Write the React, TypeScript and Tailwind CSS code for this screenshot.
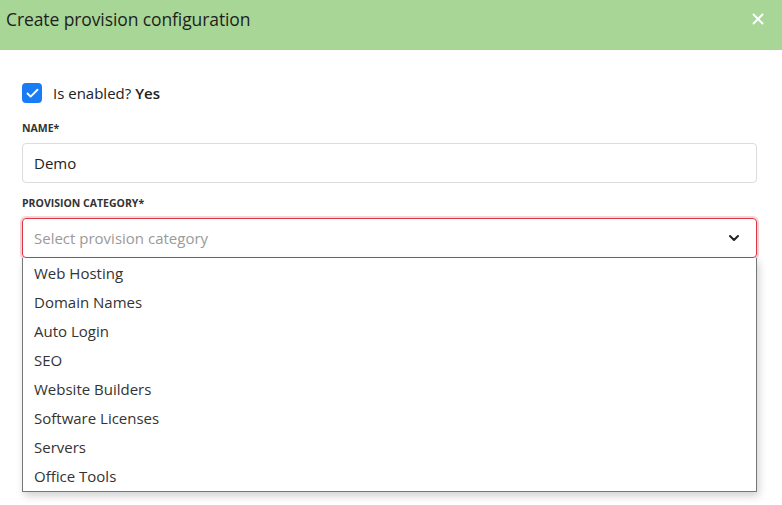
import React from 'react';
import { X, ChevronDown, Check } from 'lucide-react';

const categories = [
  'Web Hosting',
  'Domain Names',
  'Auto Login',
  'SEO',
  'Website Builders',
  'Software Licenses',
  'Servers',
  'Office Tools',
];

export default function App() {
  return (
    <div className="w-[782px] h-[505px] bg-white overflow-hidden text-[#212529]" style={{ fontFamily: '"Open Sans", "Noto Sans", sans-serif' }}>
      {/* Header */}
      <div className="h-[50px] bg-[#a8d696] flex items-start justify-between pl-[6px] pr-[15px] pt-[6px]">
        <h1 className="text-[17.5px] leading-[27px] text-[#1e1e1e] tracking-[-0.1px]">Create provision configuration</h1>
        <X className="w-[18px] h-[18px] text-white mt-[4px]" strokeWidth={2.5} />
      </div>

      {/* Body */}
      <div className="pl-[22px] pr-[25px] pt-[33px]">
        <label className="flex items-center gap-[11px] h-[20px]">
          <span className="w-[20px] h-[20px] rounded-[4px] bg-[#1a7cf5] flex items-center justify-center">
            <Check className="w-[15px] h-[15px] text-white" strokeWidth={3} />
          </span>
          <span className="text-[15px] text-[#222]">
            Is enabled? <b className="font-semibold">Yes</b>
          </span>
        </label>

        <div className="mt-[17px] text-[10.5px] font-bold text-[#333] leading-[16px]">NAME*</div>
        <div className="mt-[7px] h-[40px] border border-[#dcdcdc] rounded-[4px] flex items-center px-[11px] text-[15px] text-[#222]">
          Demo
        </div>

        <div className="mt-[12px] text-[10.5px] font-bold text-[#333] leading-[16px]">PROVISION CATEGORY*</div>
        <div className="relative mt-[7px]">
          <div className="h-[40px] border border-[#dc3545] rounded-[4px] shadow-[0_0_0_2px_rgba(220,53,69,0.2),0_3px_6px_rgba(0,0,0,0.08)] flex items-center justify-between pl-[11px] pr-[14px] text-[15px]">
            <span className="text-[#9a9a9a]">Select provision category</span>
            <ChevronDown className="w-[16px] h-[16px] text-[#222]" strokeWidth={3} />
          </div>
          <ul className="absolute left-0 right-0 top-[40px] bg-white border border-t-0 border-[#767676] shadow-[2px_4px_8px_rgba(0,0,0,0.18)] pt-[1px]">
            {categories.map((c) => (
              <li key={c} className="h-[29px] flex items-center px-[11px] text-[15px] text-[#333]">
                {c}
              </li>
            ))}
          </ul>
        </div>
      </div>
    </div>
  );
}
